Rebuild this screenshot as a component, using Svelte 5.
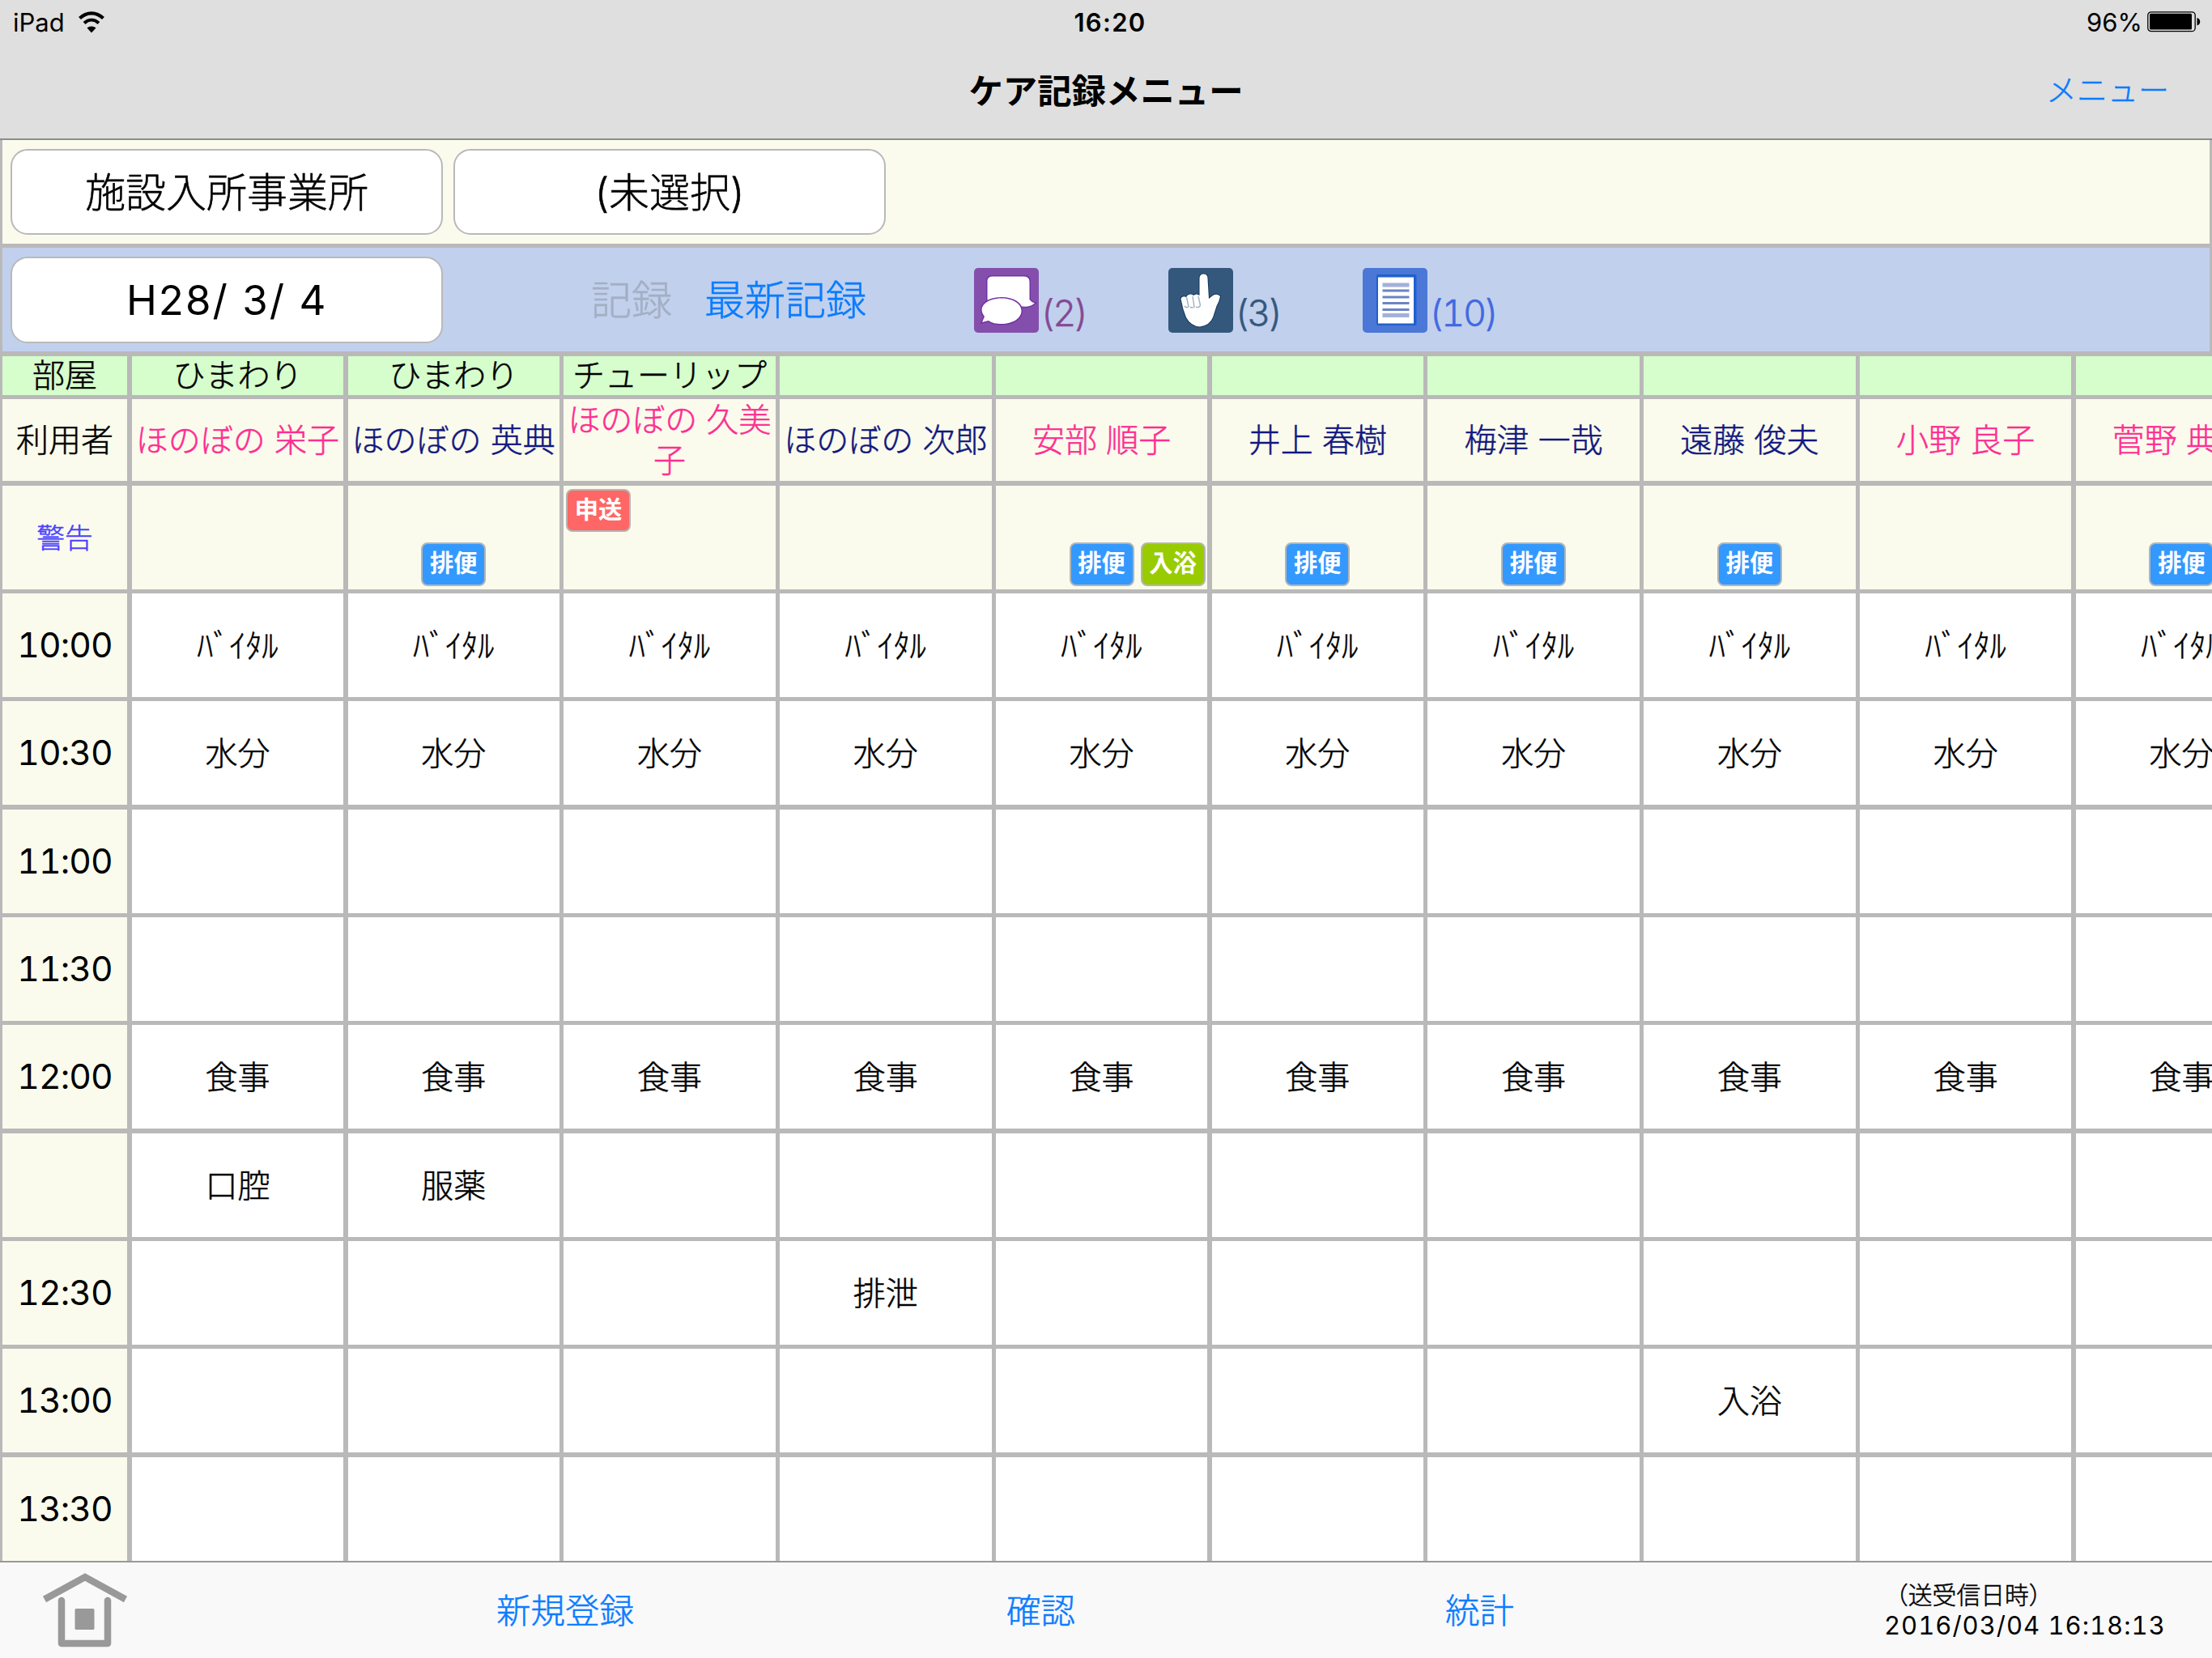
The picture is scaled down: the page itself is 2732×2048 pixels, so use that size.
<script>
  const cols = [
    { room: 'ひまわり', name: 'ほのぼの 栄子', sex: 'f', items: { 5: '口腔' } },
    { room: 'ひまわり', name: 'ほのぼの 英典', sex: 'm', alerts: ['stool'], items: { 5: '服薬' } },
    { room: 'チューリップ', name: 'ほのぼの 久美子', sex: 'f', alerts: ['note'] },
    { room: '', name: 'ほのぼの 次郎', sex: 'm', items: { 6: '排泄' } },
    { room: '', name: '安部 順子', sex: 'f', alerts: ['stool', 'bath'] },
    { room: '', name: '井上 春樹', sex: 'm', alerts: ['stool'] },
    { room: '', name: '梅津 一哉', sex: 'm', alerts: ['stool'] },
    { room: '', name: '遠藤 俊夫', sex: 'm', alerts: ['stool'], items: { 7: '入浴' } },
    { room: '', name: '小野 良子', sex: 'f' },
    { room: '', name: '菅野 典子', sex: 'f', alerts: ['stool'] }
  ];
  const times = ['10:00', '10:30', '11:00', '11:30', '12:00', '', '12:30', '13:00', '13:30'];
  const common = { 0: 'ﾊﾞｲﾀﾙ', 1: '水分', 4: '食事' };
  const labels = { stool: '排便', bath: '入浴', note: '申送' };
  const cell = (c, r) => c.items?.[r] ?? common[r] ?? '';
</script>

<div class="screen">
  <header>
    <div class="status">
      <div class="side">
        <span class="device">iPad</span>
        <svg class="wifi" viewBox="0 0 34 28">
          <path d="M2.5 9.5C11 1.2 23 1.2 31.500 9.500" fill="none" stroke="#000" stroke-width="4.200" />
          <path d="M8 15.500C13.500 10.500 20.500 10.500 26 15.500" fill="none" stroke="#000" stroke-width="4" />
          <path d="M17 27.500L11.500 21.500C14.500 18.700 19.500 18.700 22.500 21.500Z" />
        </svg>
      </div>
      <span class="clock">16:20</span>
      <div class="side end">
        <span class="percent">96%</span>
        <svg class="battery" viewBox="0 0 66 26">
          <rect x="0.800" y="0.800" width="58.400" height="23.900" rx="4" fill="none" stroke="#000" stroke-width="1.300" />
          <rect x="3" y="2.700" width="52" height="19.800" rx="1.500" />
          <path d="M61.500 8C66.500 9 66.500 16.500 61.500 17.500Z" />
        </svg>
      </div>
    </div>
    <div class="titlebar">
      <span></span>
      <h1>ケア記録メニュー</h1>
      <a class="menu">メニュー</a>
    </div>
  </header>

  <main>
    <div class="bar filters">
      <button>施設入所事業所</button>
      <button>(未選択)</button>
    </div>
    <div class="bar tools">
      <button class="date">H28/ 3/ 4</button>
      <span class="tab off">記録</span>
      <span class="tab">最新記録</span>
      <div class="counter talk">
        <svg viewBox="0 0 80 80">
          <rect width="80" height="80" rx="5" fill="#844fac" />
          <g fill="#fff" stroke="#7430a4" stroke-width="3" paint-order="stroke">
            <path d="M22 10.500H62Q68.500 11 68.500 17V39Q70.500 42 75 43.500Q69 49 60 47.500H20Q16.500 44 16.500 38V16Q16.500 11 22 10.500Z" />
            <path d="M34 37.500C48 37.500 58.500 44 58.500 53C58.500 62 48 69 34 69C27 69 22 68 18 65L10 67L13 60C3 47 17 37.500 34 37.500Z" />
          </g>
        </svg>
        <span>(2)</span>
      </div>
      <div class="counter hand">
        <svg viewBox="0 0 80 80">
          <rect width="80" height="80" rx="5" fill="#34587c" />
          <path d="M38.500 13Q38.500 7.500 43.500 7.500Q48.500 7.500 48.500 13L50 38L55 34Q60 31 64 35Q63 41 59.500 47L55 61Q51 71 39 72.500Q28 72 22 61L18.500 51L15.500 38Q17 34 22 36L24 33.500Q28 31.500 31 34Q35 31 38.500 34Z" fill="#fff" stroke="#12385f" stroke-width="2" paint-order="stroke" />
          <path d="M22.500 36L25 48Q22 50 20 47M30 35L32 48Q29 50 27 48M37 35L39.500 46Q38 50 34 48" fill="none" stroke="#9fb0c2" stroke-width="1.400" />
        </svg>
        <span>(3)</span>
      </div>
      <div class="counter doc">
        <svg viewBox="0 0 80 80">
          <rect width="80" height="80" rx="5" fill="#4b77d6" />
          <rect x="17" y="8" width="49.500" height="63" rx="2" fill="#2060cd" />
          <rect x="19" y="11.500" width="44" height="57" fill="#fff" />
          <path d="M24.500 21H57.500M24.500 58.500H57.500" stroke="#a3b0da" stroke-width="5" />
          <path d="M24.500 28H57.500M24.500 36H57.500M24.500 43.500H57.500M24.500 51.500H57.500" stroke="#6a84c6" stroke-width="3" />
        </svg>
        <span>(10)</span>
      </div>
    </div>

    <div class="sheet">
      <div class="row room">
        <div class="head">部屋</div>
        {#each cols as c}<div class="cell">{c.room}</div>{/each}
      </div>
      <div class="row user">
        <div class="head">利用者</div>
        {#each cols as c}<div class="cell {c.sex}">{c.name}</div>{/each}
      </div>
      <div class="row warn">
        <div class="head">警告</div>
        {#each cols as c}
          <div class="cell slots">
            {#each c.alerts ?? [] as a}<span class="badge {a}">{labels[a]}</span>{/each}
          </div>
        {/each}
      </div>
      {#each times as t, r}
        <div class="row slot">
          <div class="head time">{t}</div>
          {#each cols as c}<div class="cell">{cell(c, r)}</div>{/each}
        </div>
      {/each}
    </div>
  </main>

  <footer>
    <svg class="home" viewBox="0 0 106 92">
      <path d="M3 32.500L53 5L103 32.500" fill="none" stroke="#999" stroke-width="8.500" />
      <path d="M24 34V87H81V34" fill="none" stroke="#999" stroke-width="8.500" stroke-linecap="round" stroke-linejoin="round" />
      <rect x="40.500" y="44" width="24" height="26" rx="1.500" fill="#999" />
    </svg>
    <a class="add">新規登録</a>
    <a class="check">確認</a>
    <a class="stats">統計</a>
    <div class="sync">
      <span>（送受信日時）</span>
      <span class="stamp">2016/03/04 16:18:13</span>
    </div>
  </footer>
</div>

<style>
  :global(body) { margin: 0; }
  .screen {
    --u: 2.66667px;
    --x: 2.66797px;
    width: 2732px;
    height: 2048px;
    overflow: hidden;
    display: flex;
    flex-direction: column;
    background: #b9b9b9;
    color: #000;
    font-family: Inter, "Noto Sans CJK JP", sans-serif;
    font-weight: 300;
    font-size: 40px;
    -webkit-text-stroke: 0.5px currentColor;
  }
  .status, h1, .date, .time, .stamp, .badge { -webkit-text-stroke: 0; }
  header {
    flex: none;
    box-sizing: border-box;
    height: 173px;
    background: #dfdfdf;
    border-bottom: 2px solid #8c8c8c;
  }
  .status {
    display: grid;
    grid-template-columns: 1fr auto 1fr;
    align-items: center;
    height: 54px;
    padding: 0 14px 0 16px;
    font-size: 31px;
    font-weight: 400;
  }
  .side { display: flex; align-items: center; gap: 16px; }
  .end { justify-content: flex-end; gap: 6px; }
  .clock { padding-left: 8px; font-weight: 600; letter-spacing: 1.3px; }
  .wifi { width: 34px; height: 28px; }
  .battery { width: 66px; height: 26px; }
  .titlebar {
    display: grid;
    grid-template-columns: 1fr auto 1fr;
    align-items: center;
    height: 117px;
    padding-right: 53px;
    padding-left: 53px;
  }
  h1 { margin: 0; padding-top: 1px; font-size: 42.4px; font-weight: 700; line-height: 1; }
  .menu { justify-self: end; padding-bottom: 3px; font-size: 38px; line-height: 1; color: #0a7cff; }
  main {
    flex: none;
    height: 1755px;
    display: flex;
    flex-direction: column;
    gap: calc(var(--u) * 2);
    overflow: hidden;
  }
  .bar {
    flex: none;
    display: flex;
    align-items: center;
    height: calc(var(--u) * 48);
    margin: 0 var(--x);
    padding-left: calc(var(--x) * 4);
  }
  .filters { background: #fafbec; gap: calc(var(--x) * 5); }
  .tools { background: #c1d0ed; }
  button {
    flex: none;
    box-sizing: border-box;
    width: calc(var(--x) * 200);
    height: calc(var(--u) * 40);
    padding: 1px 0 0;
    border: 2px solid #b9b9b9;
    border-radius: 21px;
    background: #fff;
    color: #000;
    font: inherit;
    font-size: 50px;
    line-height: 1;
  }
  .date {
    padding: 0;
    font-size: 51px;
    font-weight: 400;
    letter-spacing: 2px;
  }
  .tab { font-size: 50px; line-height: 1; color: #0a7cff; width: 333px; padding-top: 2px; }
  .tab.off { width: 140px; margin-left: 183px; color: #a5afc4; }
  .counter {
    display: flex;
    align-items: flex-end;
    gap: 2px;
    width: 240px;
    height: 80px;
    padding-top: 2px;
    font-size: 45px;
    font-variant-numeric: tabular-nums;
    letter-spacing: -2.3px;
  }
  .counter svg { width: 80px; height: 80px; flex: none; }
  .counter span { line-height: 48px; }
  .talk { color: #844a94; }
  .hand { color: #34587c; }
  .doc { color: #4169e1; }

  .sheet { display: flex; flex-direction: column; gap: calc(var(--u) * 2); padding-left: var(--x); }
  .row {
    display: grid;
    grid-template-columns: calc(var(--x) * 58) repeat(10, calc(var(--x) * 98));
    column-gap: calc(var(--x) * 2);
    height: calc(var(--u) * 48);
    line-height: 50px;
  }
  .row > div { display: flex; align-items: center; justify-content: center; text-align: center; }
  .room { height: calc(var(--u) * 18); }
  .room > div { background: #d6fdcc; line-height: 1; }
  .user { height: calc(var(--u) * 38); }
  .user > div, .warn > div { background: #fafbec; }
  .cell { background: #fff; }
  .slot > .cell { padding-top: 2px; }
  .head { background: #fafbec; }
  .f { color: #ff2d92; }
  .m { color: #11177f; }
  .warn .head { font-size: 34.67px; color: #4a40ff; }
  .time {
    font-size: 42.67px;
    font-weight: 400;
    font-variant-numeric: tabular-nums;
    letter-spacing: -0.9px;
  }
  .row > .slots {
    display: grid;
    grid-template-columns: repeat(3, calc(var(--x) * 30));
    grid-template-rows: repeat(2, calc(var(--u) * 20));
    gap: calc(var(--u) * 5) calc(var(--x) * 3);
    align-content: center;
  }
  .badge {
    box-sizing: border-box;
    width: 100%;
    height: 100%;
    border: 2px solid #b5b5b5;
    border-radius: 8px;
    color: #fff;
    font-size: 29.33px;
    font-weight: 700;
    line-height: 48px;
  }
  .note { grid-area: 1 / 1; background: #ff6666; }
  .stool { grid-area: 2 / 2; background: #3399ff; }
  .bath { grid-area: 2 / 3; background: #99cc00; }

  footer {
    flex: 1;
    display: flex;
    align-items: center;
    border-top: 2px solid #999;
    background: #f9f9f9;
    padding-left: 52px;
  }
  .home { width: 106px; height: 92px; flex: none; }
  footer a { padding-top: 3px; font-size: 42.5px; line-height: 1; color: #0a7cff; }
  .add { margin-left: 455px; width: 630px; }
  .check { width: 542px; }
  .stats { width: 542px; }
  .sync { display: flex; flex-direction: column; font-size: 29.8px; line-height: 38px; white-space: nowrap; }
  .stamp { font-weight: 400; font-size: 31px; font-variant-numeric: tabular-nums; letter-spacing: 1px; }
</style>
